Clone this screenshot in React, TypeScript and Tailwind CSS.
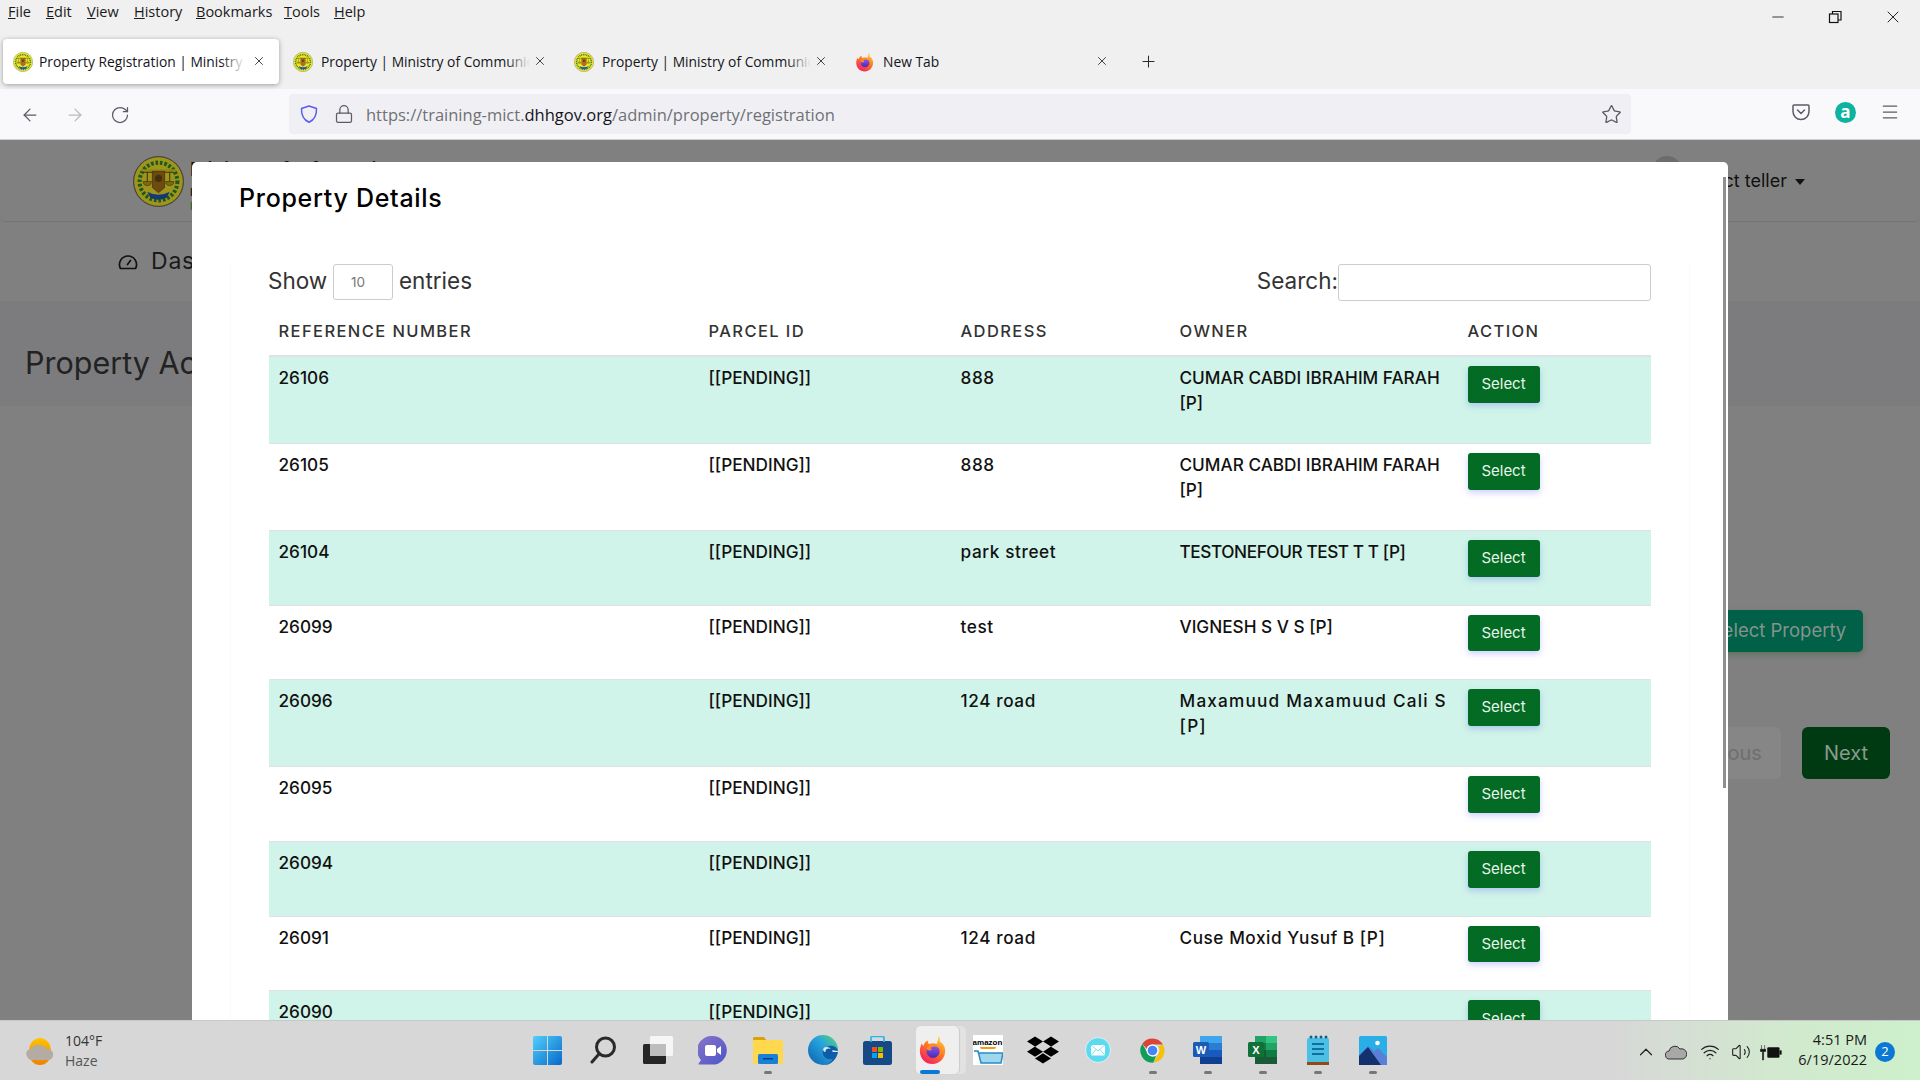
import React from "react";
import { ArrowLeft, ArrowRight, RotateCw, Lock, Star, Menu, X, Plus, Minus, ChevronUp, Wifi, Volume2 } from "lucide-react";
import { FaDropbox } from "react-icons/fa";

const POP = "font-['Inter',sans-serif]";
const SEG = "font-['Open_Sans',sans-serif]";

function Emblem({ size, dim }: { size: number; dim?: boolean }) {
  return (
    <svg width={size} height={size} viewBox="0 0 50 50" className="shrink-0">
      <circle cx="25" cy="25" r="24.3" fill="#f4e52a" stroke="#555" strokeWidth="0.8" />
      <circle cx="25" cy="25" r="18.500" fill="none" stroke="#2e8b30" strokeWidth="4" strokeDasharray="2.6 1.8" />
      <rect x="8" y="13" width="34" height="2" fill="#e4d21f" />
      <path d="M10 16h30M14 16v9M36 16v9" stroke="#5a4a10" strokeWidth="1" fill="none" />
      <path d="M10 25a4 4 0 0 0 8 0zM32 25a4 4 0 0 0 8 0z" fill="#c0a020" stroke="#5a4a10" strokeWidth="0.6" />
      <path d="M19 15h12v16l-6 5-6-5z" fill="#a8741a" stroke="#5a3a10" strokeWidth="0.6" />
      <circle cx="25" cy="22" r="3.5" fill="#6b4a16" />
      <path d="M14 35q11 6 22 0l-3 6q-8 4-16 0z" fill="#1f55b5" />
      {dim && <circle cx="25" cy="25" r="25" fill="#000" opacity="0.35" />}
    </svg>
  );
}

function Firefox({ size }: { size: number }) {
  return (
    <svg width={size} height={size} viewBox="0 0 32 32" className="shrink-0">
      <defs>
        <linearGradient id="ffa" x1="0.8" y1="0" x2="0.2" y2="1">
          <stop offset="0" stopColor="#ffd53a" />
          <stop offset="0.45" stopColor="#ff7a1f" />
          <stop offset="1" stopColor="#f5156c" />
        </linearGradient>
        <linearGradient id="ffb" x1="0.5" y1="0" x2="0.5" y2="1">
          <stop offset="0" stopColor="#8f5bff" />
          <stop offset="1" stopColor="#4a2aa8" />
        </linearGradient>
      </defs>
      <path d="M22 1c2 3 1 5 1 6 3 1 6 5 6 10 0 7.5-6 14-13.500 14C8 31 2 25 2 17c0-3 1-6 2-8 .5 1 1 2 2 2.500C6.500 8 9 6 11 6c-1 2 0 3 1 3.500 3-1 6-1 8 0 1-3 2-6 2-8.500z" fill="url(#ffa)" />
      <circle cx="16" cy="17.500" r="7" fill="url(#ffb)" />
      <path d="M9 15c1-4 5-6 9-5 3 .8 5 3 5.500 5-2-2-5-3-7.500-2.500-3 .5-3 2-1 3-2 1.500-5 1-6-.5z" fill="#ff8a1e" />
    </svg>
  );
}

function Shield() {
  return (
    <svg width="20" height="20" viewBox="0 0 20 20" fill="none" stroke="#5b5bf0" strokeWidth="1.500">
      <path d="M10 2 17.500 4.500C17.800 11 15 16 10 18.300 5 16 2.200 11 2.500 4.500z" strokeLinejoin="round" />
    </svg>
  );
}

function TabItem({ w, icon, text, active, textW }: { w: number; icon: React.ReactNode; text: string; active?: boolean; textW: number }) {
  const textLeft = active ? 36 : 38;
  return (
    <div className={`relative flex items-center h-[45px] shrink-0 rounded-[4px] pl-[10px] ${active ? "bg-white shadow-[0_1px_5px_rgba(0,0,0,0.35)]" : ""}`} style={{ width: w }}>
      <div className="w-[20px] flex justify-center">{icon}</div>
      <div className={`${active ? "ml-[6px]" : "ml-[8px]"} pt-[2px] overflow-hidden whitespace-nowrap text-[13.800px] text-[#15141a] ${SEG}`} style={{ width: textW }}>{text}</div>
      {text !== "New Tab" && (
        <div className={`absolute top-0 bottom-0 w-[24px] ${active ? "bg-gradient-to-r from-transparent to-white" : "bg-gradient-to-r from-transparent to-[#f0f0f0]"}`} style={{ left: textLeft + textW - 24 }} />
      )}
      <X size={14} strokeWidth={1.500} className="absolute text-[#2b2a33]" style={{ left: active ? w - 27 : w - 31, top: 15 }} />
    </div>
  );
}

function Win({ children, dot, className = "" }: { children: React.ReactNode; dot?: boolean; className?: string }) {
  return (
    <div className={`relative w-[55px] h-[60px] flex items-center justify-center shrink-0 ${className}`}>
      {children}
      {dot && <div className="absolute left-[23.500px] top-[51px] w-[8px] h-[3px] rounded-full bg-[#777]" />}
    </div>
  );
}

const rows: { r: string; a: string; o: string[]; t?: string }[] = [
  { r: "26106", a: "888", o: ["CUMAR CABDI IBRAHIM FARAH", "[P]"] },
  { r: "26105", a: "888", o: ["CUMAR CABDI IBRAHIM FARAH", "[P]"] },
  { r: "26104", a: "park street", o: ["TESTONEFOUR TEST T T [P]"], t: "tracking-[-0.400px]" },
  { r: "26099", a: "test", o: ["VIGNESH S V S [P]"] },
  { r: "26096", a: "124 road", o: ["Maxamuud Maxamuud Cali S", "[P]"], t: "tracking-[1.200px]" },
  { r: "26095", a: "", o: [] },
  { r: "26094", a: "", o: [] },
  { r: "26091", a: "124 road", o: ["Cuse Moxid Yusuf B [P]"], t: "tracking-[0.550px]" },
  { r: "26090", a: "", o: [] },
];

const menus: [string, string][] = [
  ["File", "w-[38px]"],
  ["Edit", "w-[41px]"],
  ["View", "w-[47px]"],
  ["History", "w-[62px]"],
  ["Bookmarks", "w-[88px]"],
  ["Tools", "w-[50px]"],
  ["Help", "w-[40px]"],
];

export default function App() {
  return (
    <div className="w-[1920px] h-[1080px] overflow-hidden flex flex-col bg-[#f0f0f0]">
      {/* menu bar */}
      <div className="relative h-[39px] shrink-0">
        <div className={`flex pl-[8px] pt-[1px] text-[14.500px] leading-[22px] text-[#1a1a1a] ${SEG}`}>
          {menus.map(([m, w]) => (
            <span key={m} className={w}><span className="underline">{m[0]}</span>{m.slice(1)}</span>
          ))}
        </div>
        <div className="absolute top-[7px] right-[17px] flex gap-[39px] items-center text-[#222]">
          <Minus size={18} strokeWidth={1.200} />
          <svg width="18" height="18" viewBox="0 0 18 18" fill="none" stroke="#111" strokeWidth="1.200"><rect x="3.500" y="6" width="8.500" height="8.500" /><path d="M6.500 6V3.500H15V12H12" /></svg>
          <X size={20} strokeWidth={1.200} />
        </div>
      </div>
      {/* tab strip */}
      <div className="h-[50px] shrink-0 flex items-start pl-[3px]">
        <TabItem active w={276} textW={206} icon={<Emblem size={20} />} text="Property Registration | Ministry of Communications" />
        <div className="w-[4px]" />
        <TabItem w={281} textW={209} icon={<Emblem size={20} />} text="Property | Ministry of Communications" />
        <TabItem w={281} textW={209} icon={<Emblem size={20} />} text="Property | Ministry of Communications" />
        <TabItem w={281} textW={209} icon={<Firefox size={20} />} text="New Tab" />
        <Plus size={19} strokeWidth={1.300} className="ml-[13px] mt-[13px] text-[#2b2a33]" />
      </div>
      {/* toolbar */}
      <div className="h-[51px] shrink-0 bg-[#f9f9fb] border-b border-[#cfcfd4] flex items-center">
        <div className="flex w-[289px] items-center pl-[20px] pt-[2px] gap-[25px] text-[#5b5b66]">
          <ArrowLeft size={20} strokeWidth={1.500} />
          <ArrowRight size={20} strokeWidth={1.500} className="text-[#b9b9c0]" />
          <RotateCw size={20} strokeWidth={1.500} />
        </div>
        <div className="w-[1342px] h-[40px] rounded-[4px] bg-[#f0f0f4] flex items-center pl-[10px] pr-[9px]">
          <Shield />
          <Lock size={20} strokeWidth={1.500} className="ml-[15px] text-[#5b5b66]" />
          <div className={`ml-[12px] pt-[2px] flex-1 text-[16.500px] whitespace-nowrap text-[#6f7076] ${SEG}`}>
            https://training-mict.<span className="text-[#15141a]">dhhgov.org</span>/admin/property/registration
          </div>
          <Star size={21} strokeWidth={1.500} className="text-[#5b5b66]" />
        </div>
        <div className="flex-1 flex items-center justify-end gap-[24px] pr-[20px] -mt-[4px]">
          <svg width="20" height="20" viewBox="0 0 20 20" fill="none" stroke="#5b5b66" strokeWidth="1.500"><path d="M3 3h14a1 1 0 0 1 1 1v5.500a8 8 0 0 1-16 0V4a1 1 0 0 1 1-1z" /><path d="m6.500 8 3.500 3.500L13.500 8" strokeLinecap="round" /></svg>
          <div className={`w-[21px] h-[21px] rounded-full bg-[#0db2a0] text-white flex items-center justify-center text-[17px] font-bold leading-none pb-[2px] ${SEG}`}>a</div>
          <Menu size={20} strokeWidth={1.500} className="text-[#5b5b66]" />
        </div>
      </div>

      {/* dimmed page + modal */}
      <div className={`relative h-[880px] shrink-0 overflow-hidden bg-[#808080] ${POP}`}>
        <div className="h-[82px] rounded-b-[5px] border-b border-[#747474] bg-[#808080] flex items-start pl-[133px] pt-[16px] relative">
          <Emblem size={51} dim />
          <div className="ml-[6px] mt-[1px] text-[19px] font-semibold leading-[26px] text-[#111] whitespace-nowrap">Ministry of Information and
            <div className="text-[11px] leading-[14px] mt-[2px] text-[#222]">Republic</div>
            <div className="text-[11px] leading-[14px] text-[#2a6a3a]">Portal</div>
          </div>
          <div className="flex-1" />
          <div className="w-[30px] h-[30px] rounded-full bg-[#6c6c6c] mr-[5px]" />
          <div className="text-[18px] leading-[50px] text-[#111] pr-[133px] relative whitespace-nowrap">Select teller
            <span className="absolute right-[115px] top-[23px] border-x-[5px] border-x-transparent border-t-[6px] border-t-[#111]" />
          </div>
        </div>
        <div className="h-[79px] bg-[#808080] flex items-center pl-[118px]">
          <svg width="20" height="18" viewBox="0 0 20 18" fill="none" stroke="#111" strokeWidth="1.700"><path d="M2.500 15.500a8.500 8.500 0 1 1 15 0z" strokeLinejoin="round" /><path d="m9.500 11.500 3-4" strokeLinecap="round" /></svg>
          <span className="ml-[13px] text-[23px] tracking-[0.800px] text-[#1a1a1a]">Dashboard</span>
        </div>
        <div className="h-[105px] bg-[#7c7c7e] pl-[25px] pt-[39px] text-[30.500px] leading-[46px] text-[#222]">Property Account</div>
        <div className="h-[400px] bg-[#808080] rounded-b-[5px] relative">
          <div className="absolute right-[57px] top-[204px] w-[175px] h-[42px] rounded-[5px] bg-[#006048] shadow-[0_3px_6px_rgba(0,80,0,0.25)] flex items-center justify-center pl-[6px] text-[18.500px] text-[#84948c]">Select Property</div>
          <div className="absolute right-[139px] top-[321px] w-[120px] h-[52px] rounded-[6px] bg-[#868686] flex items-center justify-center text-[20px] text-[#6f6f6f]">Previous</div>
          <div className="absolute right-[30px] top-[321px] w-[88px] h-[52px] rounded-[6px] bg-[#003a12] flex items-center justify-center text-[20px] text-[#8a9a8e]">Next</div>
        </div>

        {/* modal */}
        <div className="absolute left-[192px] top-[22px] w-[1536px] h-[1000px] bg-white rounded-t-[5px] overflow-hidden">
          <div className="pl-[47px] pt-[18px] h-[105px] text-[25px] leading-[36px] font-medium text-black tracking-[0.700px]">Property Details</div>
          <div className="ml-[38px] w-[1460px] border-x border-[#fafafa] px-[38px]">
            <div className="flex items-center justify-between h-[36px] -mt-[3px] text-[22.500px] text-[#333]">
              <div className="flex items-center -ml-[1px]">
                <span className="w-[65px] pb-[2px]">Show</span>
                <div className="w-[60px] h-[36px] border border-[#ccc] rounded-[3px] text-[13.500px] text-[#777] flex items-center pl-[17px]">10</div>
                <span className="ml-[6px] pb-[2px]">entries</span>
              </div>
              <div className="flex items-center">
                <span className="pb-[2px]">Search:</span>
                <div className="w-[313px] h-[37px] border border-[#ccc] rounded-[3px] bg-white" />
              </div>
            </div>
            <table className="table-fixed w-[1382px] border-collapse mt-[11px] text-[17.200px] leading-[24.500px] text-[#111] font-medium">
              <colgroup>
                <col className="w-[430px]" />
                <col className="w-[252px]" />
                <col className="w-[219px]" />
                <col className="w-[288px]" />
                <col className="w-[193px]" />
              </colgroup>
              <thead>
                <tr className="h-[45px] border-b-2 border-[#dee2e6] text-left text-[16.500px] tracking-[1.400px] text-[#333]">
                  <th className="font-medium px-[9.500px] pb-[4px]">REFERENCE NUMBER</th>
                  <th className="font-medium px-[9.500px] pb-[4px]">PARCEL ID</th>
                  <th className="font-medium px-[9.500px] pb-[4px]">ADDRESS</th>
                  <th className="font-medium px-[9.500px] pb-[4px]">OWNER</th>
                  <th className="font-medium px-[9.500px] pb-[4px]">ACTION</th>
                </tr>
              </thead>
              <tbody>
                {rows.map((row, i) => (
                  <tr key={row.r} className={`border-b border-[#dee2e6] ${i % 2 === 0 ? "bg-[#d0f4e9]" : "bg-white"}`}>
                    <td className="align-top pl-[9.500px] pt-[9px] pb-[28px]">{row.r}</td>
                    <td className="align-top pl-[9.500px] pt-[9px] pb-[28px]">[[PENDING]]</td>
                    <td className="align-top pl-[9.500px] pt-[9px] pb-[28px] tracking-[0.600px]">{row.a}</td>
                    <td className={`align-top pl-[9.500px] pt-[9px] pb-[28px] whitespace-nowrap ${row.t ?? ""}`}>
                      {row.o.map((l, k) => <div key={k}>{l}</div>)}
                    </td>
                    <td className="align-top pl-[9.500px] pt-[9px] pb-[28px]">
                      <div className="w-[72px] h-[36.700px] rounded-[3px] bg-[#036b24] text-[#e8f5ea] text-[15px] font-normal flex items-center justify-center shadow-[0_3px_6px_rgba(80,90,255,0.28)]">Select</div>
                    </td>
                  </tr>
                ))}
              </tbody>
            </table>
          </div>
          {/* modal scrollbar */}
          <div className="absolute left-[1531px] top-[15px] w-[3px] h-[611px] bg-[#8f8f8f]" />
        </div>
      </div>

      {/* taskbar */}
      <div className={`relative z-10 h-[60px] shrink-0 border-t border-[#c8c8c8] flex items-start bg-[linear-gradient(90deg,#d7d7d7_0%,#d7d7d7_84%,#d2e8cf_92%,#cdf0cb_100%)] ${SEG}`}>
        <div className="w-[520px] shrink-0 flex items-center h-[60px] pl-[25px]">
          <svg width="30" height="28" viewBox="0 0 30 28">
            <defs>
              <linearGradient id="sun" x1="0" y1="0" x2="0" y2="1"><stop offset="0" stopColor="#ffc400" /><stop offset="1" stopColor="#f08000" /></linearGradient>
            </defs>
            <path d="M4 14a11 13 0 0 1 22 0v2a11 12 0 0 1-22 0z" fill="url(#sun)" />
            <path d="M2 19c-2-3 0-7 4-7 1-3 5-5 9-4 3 .5 6 2 7 4 4 0 7 3 6 7-1 3-3 4-5 4H7c-2 0-4-1-5-4z" fill="#b4aca2" />
          </svg>
          <div className="ml-[10px] text-[14px] leading-[20px] text-[#333]">
            <div>104°F</div>
            <div className="text-[#555]">Haze</div>
          </div>
        </div>
        <div className="flex -mt-[1px]">
          <Win>
            <svg width="29" height="29" viewBox="0 0 29 29">
              <defs><linearGradient id="w1" x1="0" y1="0" x2="1" y2="1"><stop offset="0" stopColor="#52cffb" /><stop offset="1" stopColor="#0669c9" /></linearGradient></defs>
              <path d="M0 2a2 2 0 0 1 2-2h12v14H0zM15 0h12a2 2 0 0 1 2 2v12H15zM0 15h14v14H2a2 2 0 0 1-2-2zM15 15h14v12a2 2 0 0 1-2 2H15z" fill="url(#w1)" />
            </svg>
          </Win>
          <Win>
            <svg width="28" height="28" viewBox="0 0 28 28" fill="none" stroke="#2a2a2a" strokeWidth="3"><circle cx="16.500" cy="11" r="9" /><path d="m10 18-7 8" strokeLinecap="round" /></svg>
          </Win>
          <Win>
            <svg width="30" height="28" viewBox="0 0 30 28">
              <rect x="0" y="8" width="23" height="20" rx="1.500" fill="#262626" />
              <rect x="7" y="0" width="23" height="20" rx="1.500" fill="#f6f6f6" />
              <rect x="7" y="8" width="16" height="12" fill="#bdbdbd" />
            </svg>
          </Win>
          <Win>
            <svg width="29" height="29" viewBox="0 0 29 29">
              <defs><linearGradient id="ch" x1="0" y1="0" x2="1" y2="1"><stop offset="0" stopColor="#8a74c9" /><stop offset="1" stopColor="#4a56c8" /></linearGradient></defs>
              <path d="M14.500 0a14.300 14.300 0 0 1 0 28.600H1.500C.5 28.600 0 28 1 27l2-3A14.300 14.300 0 0 1 14.500 0z" fill="url(#ch)" />
              <rect x="7" y="9" width="11" height="11" rx="2" fill="#fff" />
              <path d="m19 13 4-3v9l-4-3z" fill="#fff" />
            </svg>
          </Win>
          <Win dot>
            <svg width="30" height="28" viewBox="0 0 30 28">
              <path d="M0 2a1 1 0 0 1 1-1h10l3 4h-14z" fill="#d9a20b" />
              <rect x="0" y="4" width="30" height="24" rx="1" fill="#ffd84d" />
              <rect x="5" y="18" width="20" height="10" rx="1.500" fill="#1581d8" />
              <rect x="10" y="22" width="10" height="1.500" fill="#0d3e7a" />
            </svg>
          </Win>
          <Win>
            <svg width="30" height="30" viewBox="0 0 30 30">
              <defs>
                <linearGradient id="e1" x1="0" y1="1" x2="1" y2="0"><stop offset="0" stopColor="#0a5fb0" /><stop offset="0.6" stopColor="#28a5dd" /><stop offset="1" stopColor="#5fd968" /></linearGradient>
              </defs>
              <circle cx="15" cy="15" r="15" fill="url(#e1)" />
              <path d="M30 17c0-5-5-7-9-6-5 1-7 5-6 8 1 4 5 6 10 5-2 3-6 6-10 6 7 1 13-5 15-13z" fill="#0f5ca8" />
              <path d="M30 17H17c-3-1-2-5 1-5s5 1 5 3l7 1z" fill="#dfe9e9" />
              <ellipse cx="21" cy="16.500" rx="3.500" ry="3" fill="#0d5aa5" />
            </svg>
          </Win>
          <Win>
            <svg width="29" height="29" viewBox="0 0 29 29">
              <rect x="0" y="5" width="29" height="24" rx="2.500" fill="#154a87" />
              <path d="M8 6V2a1.500 1.500 0 0 1 1.500-1.500h10A1.500 1.500 0 0 1 21 2v4" fill="none" stroke="#29b6e8" strokeWidth="1.700" />
              <rect x="9" y="11" width="5" height="5" fill="#f25022" /><rect x="15" y="11" width="5" height="5" fill="#7fba00" />
              <rect x="9" y="17" width="5" height="5" fill="#00a4ef" /><rect x="15" y="17" width="5" height="5" fill="#ffb900" />
            </svg>
          </Win>
          <Win>
            <div className="absolute left-[14px] top-[6px] w-[47px] h-[48px] rounded-[5px] bg-[#e2e2e2]" />
            <div className="absolute left-[11px] top-[6px] w-[43px] h-[48px] rounded-[5px] bg-[#efefef] shadow-[1px_0_1px_rgba(0,0,0,0.1)]" />
            <div className="relative"><Firefox size={30} /></div>
            <div className="absolute left-[15px] top-[50px] w-[20px] h-[4px] rounded-full bg-[#0a78d4]" />
          </Win>
          <Win>
            <div className="w-[30px] h-[30px] bg-white flex flex-col items-center overflow-hidden">
              <span className="text-[8px] leading-[9px] font-bold mt-[3px] text-black font-['Liberation_Sans',sans-serif]">amazon</span>
              <div className="w-[16px] h-[2px] rounded-b-full bg-[#f39c12]" />
              <svg width="30" height="14" viewBox="0 0 30 14" className="mt-[1px]"><path d="M1 1h4l3 12h20l2-10H6" fill="#9ed7ee" stroke="#2b8cc4" strokeWidth="1.500" /></svg>
            </div>
          </Win>
          <Win>
            <FaDropbox size={32} color="#000" />
          </Win>
          <Win>
            <svg width="26" height="26" viewBox="0 0 26 26">
              <circle cx="13" cy="13" r="12.500" fill="#5bdaf0" stroke="#e4eef0" strokeWidth="1" />
              <rect x="6" y="8" width="14" height="10.500" rx="1" fill="#fff" />
              <path d="m6 8 7 6 7-6M6 18.500l5-6M20 18.500l-5-6" fill="none" stroke="#5bdaf0" strokeWidth="0.800" />
            </svg>
          </Win>
          <Win dot>
            <svg width="29" height="29" viewBox="0 0 48 48">
              <path d="M24 4a20 20 0 0 1 17.320 10H24a10 10 0 0 0-9.500 6.900L7.200 13A20 20 0 0 1 24 4z" fill="#db4437" />
              <path d="M41.320 14A20 20 0 0 1 25.500 44l8.200-14.500A10 10 0 0 0 33 17z" fill="#f4c20d" />
              <path d="M7.200 13l8.500 15A10 10 0 0 0 30 32.500L25.500 44A20 20 0 0 1 7.200 13z" fill="#0f9d58" />
              <circle cx="24" cy="24" r="10" fill="#fff" />
              <circle cx="24" cy="24" r="8" fill="#4285f4" />
            </svg>
          </Win>
          <Win dot>
            <svg width="30" height="30" viewBox="0 0 30 30">
              <rect x="7" y="1" width="22" height="7" fill="#41a5ee" /><rect x="7" y="8" width="22" height="7" fill="#2b7cd3" />
              <rect x="7" y="15" width="22" height="7" fill="#185abd" /><rect x="7" y="22" width="22" height="7" fill="#103f91" />
              <rect x="0" y="7" width="16" height="15" rx="1.500" fill="#1a5bb8" />
              <text x="8" y="19" textAnchor="middle" fontSize="11" fontWeight="700" fill="#fff" fontFamily="Liberation Sans">W</text>
            </svg>
          </Win>
          <Win dot>
            <svg width="30" height="30" viewBox="0 0 30 30">
              <rect x="7" y="1" width="11" height="7" fill="#21a366" /><rect x="18" y="1" width="11" height="7" fill="#33c481" />
              <rect x="7" y="8" width="11" height="7" fill="#107c41" /><rect x="18" y="8" width="11" height="7" fill="#21a366" />
              <rect x="7" y="15" width="11" height="7" fill="#185c37" /><rect x="18" y="15" width="11" height="7" fill="#107c41" />
              <rect x="7" y="22" width="22" height="7" fill="#185c37" />
              <rect x="0" y="7" width="16" height="15" rx="1.500" fill="#0f7038" />
              <text x="8" y="19" textAnchor="middle" fontSize="11" fontWeight="700" fill="#fff" fontFamily="Liberation Sans">X</text>
            </svg>
          </Win>
          <Win dot>
            <svg width="22" height="30" viewBox="0 0 22 30">
              <rect x="0" y="3" width="22" height="25" rx="1.500" fill="#4cc0e4" />
              <rect x="0" y="27" width="22" height="3" fill="#8f4a16" />
              <circle cx="4" cy="2" r="1.500" fill="#0f5f8a" /><circle cx="9" cy="2" r="1.500" fill="#0f5f8a" /><circle cx="14" cy="2" r="1.500" fill="#0f5f8a" /><circle cx="19" cy="2" r="1.500" fill="#0f5f8a" />
              <path d="M5 9h12M5 14h12M5 19h12" stroke="#0f6fa0" strokeWidth="1.800" />
            </svg>
          </Win>
          <Win dot>
            <svg width="28" height="29" viewBox="0 0 28 29">
              <rect width="28" height="29" rx="1.500" fill="#29aee8" />
              <circle cx="18.500" cy="7" r="2.300" fill="#fff" />
              <path d="M0 29V19L9 10l6 5 4-3 9 9v8z" fill="#5b7fd6" />
              <path d="M0 29V20L9 11l13 18z" fill="#13316f" />
            </svg>
          </Win>
        </div>
        <div className="flex-1 relative h-[60px] text-[#111]">
          <div className="absolute left-[235px] top-[20px] flex items-center text-[#222]">
            <ChevronUp size={22} strokeWidth={1.300} />
            <svg className="ml-[8px]" width="22" height="16" viewBox="0 0 22 16"><path d="M5 15a4 4 0 0 1-1-8 6 6 0 0 1 11-2 5 5 0 0 1 3 10z" fill="#a8a8a8" stroke="#333" strokeWidth="1" /></svg>
            <Wifi size={20} strokeWidth={1.500} className="ml-[13px]" />
            <Volume2 size={20} strokeWidth={1.300} className="ml-[11px]" />
            <svg className="ml-[9px]" width="22" height="17" viewBox="0 0 20 16" fill="#111"><path d="M1 1v4M4 1v4M0 5h5v2H3v8H2V7H0z" stroke="#111" strokeWidth="0.500" /><rect x="6.500" y="3" width="11.500" height="10" rx="1" /><rect x="18" y="6" width="2" height="4" /></svg>
          </div>
          <div className="absolute right-[53px] top-[9px] text-right text-[14.500px] leading-[20px] text-[#1a1a1a]">
            <div>4:51 PM</div>
            <div>6/19/2022</div>
          </div>
          <div className="absolute right-[25px] top-[21px] w-[20px] h-[20px] rounded-full bg-[#0a78d4] text-white text-[13px] flex items-center justify-center">2</div>
        </div>
      </div>
    </div>
  );
}
